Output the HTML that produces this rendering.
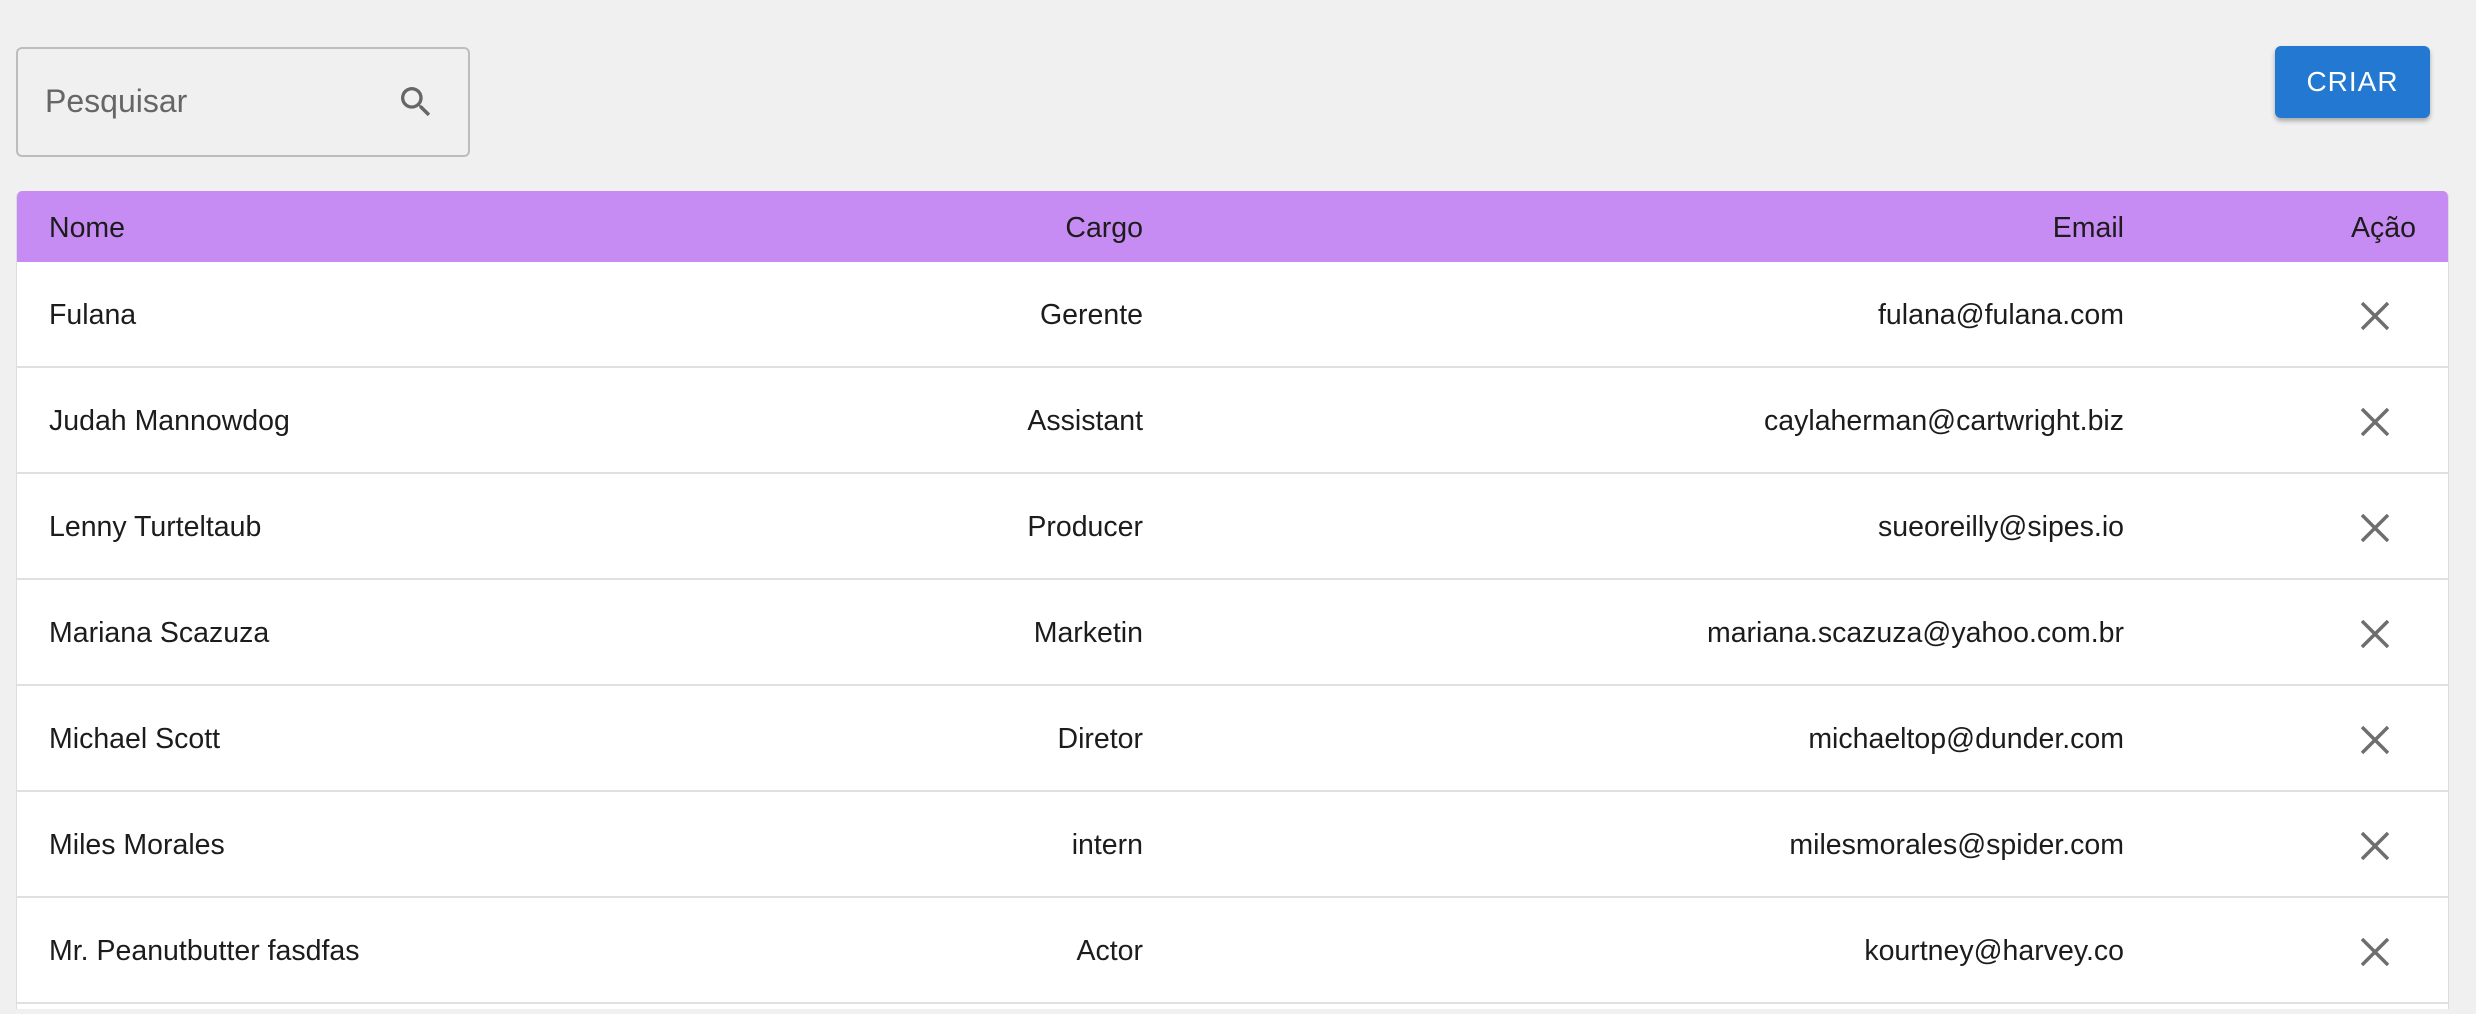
<!DOCTYPE html>
<html style="overflow:hidden;height:1014px"><head><meta charset="utf-8"><style>
body{margin:0;width:2476px;height:1014px;background:#f0f0f0;font-family:"Liberation Sans",Arial,sans-serif;overflow:hidden;position:relative;color:#1c1c1c}
.search{position:absolute;left:16px;top:47px;width:454px;height:110px;border:2px solid #bdbdbd;border-radius:6px;box-sizing:border-box}
.search span{position:absolute;left:27px;top:34px;font-size:32px;color:#666}
.tbl{position:absolute;left:16px;top:191px;width:2433px;background:#fff;border-radius:6px 6px 0 0;overflow:hidden;height:818px;border-right:1px solid #ddd;border-left:1px solid #ddd;box-sizing:border-box}
.row{position:relative;height:106px;border-bottom:2px solid #e0e0e0;box-sizing:border-box;font-size:28.5px}
.head{height:71px;background:#c78cf3;border-bottom:none}
.c{position:absolute;top:50%;transform:translateY(-45%);white-space:nowrap}
.n{left:32px}.g{right:1305px}.e{right:324px}.a{right:32px}
.x{position:absolute;left:2344px;top:40px}
</style></head><body>
<div class="search"><span>Pesquisar</span>
<svg width="40" height="40" viewBox="0 0 24 24" style="position:absolute;left:378px;top:33px"><path fill="#666" d="M15.5 14h-.79l-.28-.27A6.470 6.47 0 0 0 16 9.5 6.5 6.5 0 1 0 9.5 16c1.61 0 3.09-.59 4.230-1.57l.27.28v.79l5 4.99L20.49 19l-4.99-5zm-6 0C7.01 14 5 11.99 5 9.5S7.01 5 9.5 5 14 7.01 14 9.5 11.99 14 9.5 14z"/></svg></div>
<div style="position:absolute;left:2275px;top:46px;width:155px;height:72px;background:#2378d1;border-radius:6px;box-shadow:0 3px 5px rgba(0,0,0,.3);color:#fff;font-size:28px;text-align:center;line-height:72px;letter-spacing:1px">CRIAR</div>
<div class="tbl">
<div class="row head"><div class="c n">Nome</div><div class="c g">Cargo</div><div class="c e">Email</div><div class="c a">Ação</div></div>
<div class="row"><div class="c n">Fulana</div><div class="c g">Gerente</div><div class="c e">fulana@fulana.com</div><svg class="x" width="28" height="28"><path d="M1 1L27 27M27 1L1 27" stroke="#6e6e6e" stroke-width="3.5"/></svg></div>
<div class="row"><div class="c n">Judah Mannowdog</div><div class="c g">Assistant</div><div class="c e">caylaherman@cartwright.biz</div><svg class="x" width="28" height="28"><path d="M1 1L27 27M27 1L1 27" stroke="#6e6e6e" stroke-width="3.5"/></svg></div>
<div class="row"><div class="c n">Lenny Turteltaub</div><div class="c g">Producer</div><div class="c e">sueoreilly@sipes.io</div><svg class="x" width="28" height="28"><path d="M1 1L27 27M27 1L1 27" stroke="#6e6e6e" stroke-width="3.5"/></svg></div>
<div class="row"><div class="c n">Mariana Scazuza</div><div class="c g">Marketin</div><div class="c e">mariana.scazuza@yahoo.com.br</div><svg class="x" width="28" height="28"><path d="M1 1L27 27M27 1L1 27" stroke="#6e6e6e" stroke-width="3.5"/></svg></div>
<div class="row"><div class="c n">Michael Scott</div><div class="c g">Diretor</div><div class="c e">michaeltop@dunder.com</div><svg class="x" width="28" height="28"><path d="M1 1L27 27M27 1L1 27" stroke="#6e6e6e" stroke-width="3.5"/></svg></div>
<div class="row"><div class="c n">Miles Morales</div><div class="c g">intern</div><div class="c e">milesmorales@spider.com</div><svg class="x" width="28" height="28"><path d="M1 1L27 27M27 1L1 27" stroke="#6e6e6e" stroke-width="3.5"/></svg></div>
<div class="row"><div class="c n">Mr. Peanutbutter fasdfas</div><div class="c g">Actor</div><div class="c e">kourtney@harvey.co</div><svg class="x" width="28" height="28"><path d="M1 1L27 27M27 1L1 27" stroke="#6e6e6e" stroke-width="3.5"/></svg></div>
</div>
</body></html>
